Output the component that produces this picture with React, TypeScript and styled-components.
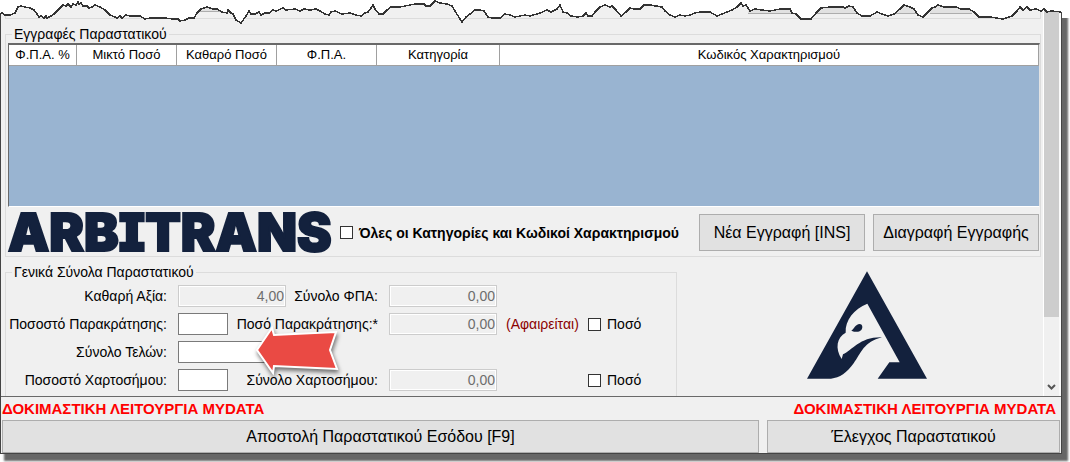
import React from "react";
import styled, { createGlobalStyle } from "styled-components";

const GlobalStyle = createGlobalStyle`
  *, *::before, *::after { box-sizing: border-box; }
  body {
    margin: 0;
    background: #fff;
    color: #000;
    font-family: "Liberation Sans", Arial, sans-serif;
    font-size: 14px;
    line-height: 16px;
    overflow: hidden;
  }
  button, input { font: inherit; color: inherit; }
`;

const Window = styled.div`
  position: relative;
  margin: 0 8px 8px 0;
  background: #f0f0f0;
  border: 1px solid #444;
  border-top: 0;
  box-shadow: 5px 6px 2px 1px #666;
`;

const TornEdge = styled.svg`
  position: absolute;
  top: 0;
  left: -1px;
  width: calc(100% + 10px);
  height: 24px;
`;

const ScrollPanel = styled.div`
  display: flex;
  border-bottom: 1px solid #696969;
`;

const Content = styled.div`
  flex: 1;
  min-width: 0;
  padding: 0 2px 0 4px;
`;

const PreviousGroup = styled.div`
  height: 19px;
  margin-bottom: 7px;
  border: 1px solid #dcdcdc;
  border-top: 0;
`;

const Group = styled.fieldset<{ $open?: boolean }>`
  min-width: 0;
  margin: 0;
  padding: ${(p) => (p.$open ? "5px 4px 5px 0" : "1px 0 5px 2px")};
  border: 1px solid #dcdcdc;
  border-bottom-width: ${(p) => (p.$open ? 0 : 1)}px;
`;

const Legend = styled.legend<{ $inset: number }>`
  margin-left: ${(p) => p.$inset}px;
  padding: 0 2px;
`;

const Grid = styled.div`
  height: 164px;
  background: #99b4d1;
  border: 1px solid #696969;
  border-top-width: 2px;
  border-right-color: #e3e3e3;
  border-bottom-color: #fff;
`;

const Table = styled.table`
  width: 100%;
  table-layout: fixed;
  border-collapse: separate;
  border-spacing: 0;
  font-size: 13px;
`;

const HeadCell = styled.th<{ $width?: number }>`
  width: ${(p) => (p.$width ? `${p.$width}px` : "auto")};
  height: 21px;
  padding: 0;
  background: #fff;
  border-right: 1px solid #a0a0a0;
  border-bottom: 1px solid #a0a0a0;
  font-weight: normal;
`;

const Actions = styled.div`
  display: flex;
  align-items: center;
  margin-top: 7px;
`;

const Wordmark = styled.span`
  width: 332px;
  color: #13213d;
  font-family: Inter, "Liberation Sans", sans-serif;
  font-size: 52px;
  font-weight: 900;
  line-height: 36px;
  font-feature-settings: "cv08" 1;
  -webkit-text-stroke: 2px #13213d;
  white-space: nowrap;
`;

const Check = styled.label<{ $bold?: boolean }>`
  display: flex;
  align-items: center;
  gap: 6px;
  font-weight: ${(p) => (p.$bold ? "bold" : "normal")};
  white-space: nowrap;
`;

const Box = styled.input`
  appearance: none;
  width: 13px;
  height: 13px;
  margin: 0;
  background: #fff;
  border: 1px solid #333;
`;

const Button = styled.button<{ $grow?: boolean }>`
  height: ${(p) => (p.$grow ? 33 : 37)}px;
  width: ${(p) => (p.$grow ? "100%" : "166px")};
  padding: 0;
  background: #e1e1e1;
  border: 1px solid #adadad;
  font-size: 16px;
  white-space: nowrap;
`;

const ButtonPair = styled.div`
  display: flex;
  gap: 8px;
  margin-left: auto;
  margin-right: 1px;
`;

const Lower = styled.div`
  display: flex;
  align-items: flex-start;
  gap: 16px;
  margin-top: 7px;
`;

const Totals = styled.div`
  position: relative;
  flex: 0 0 672px;
`;

const Fields = styled.div`
  display: grid;
  grid-template-columns: 172px 108px 103px 108px 82px auto;
  grid-auto-rows: 22px;
  row-gap: 6px;
  align-items: center;
`;

const FieldLabel = styled.label<{ $column: number }>`
  grid-column: ${(p) => p.$column};
  justify-self: end;
  margin-right: 11px;
  white-space: nowrap;
`;

const Field = styled.input<{ $short?: boolean }>`
  width: ${(p) => (p.$short ? 50 : 108)}px;
  height: 22px;
  margin: 0;
  padding: 0 1px;
  background: #fff;
  border: 1px solid #7a7a7a;
  border-radius: 0;
  text-align: right;
  &:disabled {
    color: #6d6d6d;
    background: #f0f0f0;
    border-color: #ccc;
    box-shadow: inset 0 0 0 1px #fff;
  }
`;

const Note = styled.span`
  padding-left: 9px;
  color: #8b0000;
  white-space: nowrap;
`;

const CheckSlot = styled.div`
  grid-column: 6;
  padding-left: 9px;
`;

const Pointer = styled.svg`
  position: absolute;
  left: 246px;
  top: 56px;
  filter: drop-shadow(1px 3px 2px #0008);
`;

const Emblem = styled.svg`
  display: block;
  margin: 7px auto 0;
`;

const ScrollBar = styled.div`
  display: flex;
  flex-direction: column;
  justify-content: space-between;
  width: 18px;
  border-left: 1px solid #fff;
  border-right: 2px solid #fafafa;
`;

const Thumb = styled.div`
  height: 317px;
  background: #cdcdcd;
`;

const Arrow = styled.svg`
  align-self: center;
  margin-bottom: 5px;
`;

const Footer = styled.div`
  display: grid;
  grid-template-columns: 757fr 293fr;
  column-gap: 8px;
  padding: 0 1px;
`;

const Status = styled.p<{ $end?: boolean }>`
  margin: 0;
  padding-right: ${(p) => (p.$end ? 4 : 0)}px;
  color: #f00;
  font-size: 15px;
  font-weight: bold;
  line-height: 23px;
  white-space: nowrap;
  text-align: ${(p) => (p.$end ? "right" : "left")};
`;

const tear =
  "0,14 2,13 5,15 10,15 15,13 17,9 18,7 21,6 25,7 30,8 34,10 37,14 39,17 41,16 44,18 46,16 47,18 51,16 54,14 57,11 60,8 63,5 66,6 68,4 71,7 73,4 76,5 78,2 79,4 81,3 83,6 87,6 89,8 92,7 95,5 100,7 105,10 110,15 115,17 117,18 120,16 122,18 126,15 130,16 140,16 145,19 150,18 158,18 165,18 173,19 178,19 180,21 185,20 189,18 194,18 197,13 201,9 207,7 213,9 217,9 222,12 227,13 228,10 231,13 233,14 236,20 241,23 246,16 249,11 251,14 255,14 259,12 261,15 265,13 269,13 273,10 276,11 283,8 286,10 295,9 300,11 304,9 310,10 316,9 320,11 325,14 329,15 331,12 335,11 342,14 350,13 356,15 361,16 365,13 368,12 371,8 373,5 375,9 379,14 383,14 387,10 391,7 400,7 410,5 415,4 424,4 426,6 430,6 435,1 440,3 447,4 452,6 455,11 460,19 462,22 466,17 470,14 475,10 480,10 484,11 488,17 492,18 500,18 505,14 510,15 515,17 525,15 530,16 540,13 547,10 551,12 557,9 560,5 563,12 567,13 571,16 578,17 583,16 586,13 588,16 592,16 595,12 600,7 605,5 610,7 612,6 616,10 621,16 626,12 630,8 634,9 640,9 644,5 650,5 662,7 665,11 670,15 675,17 680,15 685,16 690,15 695,13 700,12 710,12 717,16 722,14 727,12 732,10 737,7 741,3 743,6 746,5 750,11 755,9 762,10 770,11 780,9 790,9 792,13 796,14 801,19 811,19 816,13 821,8 830,7 843,7 845,8 849,6 853,7 857,13 862,16 870,16 877,12 882,14 888,16 894,14 900,9 904,5 910,7 914,9 918,15 923,17 928,12 932,8 935,7 938,5 944,7 956,7 961,9 969,9 974,12 979,17 990,17 1003,19 1012,16 1017,11 1020,7 1023,10 1027,7 1030,10 1036,9 1041,11 1044,9 1047,12 1051,11 1061,12";

const columns: [string, number?][] = [
  ["Φ.Π.Α. %", 68],
  ["Μικτό Ποσό", 100],
  ["Καθαρό Ποσό", 100],
  ["Φ.Π.Α.", 100],
  ["Κατηγορία", 123],
  ["Κωδικός Χαρακτηρισμού"],
];

export default function App() {
  return (
    <>
      <GlobalStyle />
      <Window>
        <ScrollPanel>
          <Content>
            <PreviousGroup />
            <Group>
              <Legend $inset={4}>Εγγραφές Παραστατικού</Legend>
              <Grid>
                <Table>
                  <thead>
                    <tr>
                      {columns.map(([title, width]) => (
                        <HeadCell key={title} $width={width} scope="col">
                          {title}
                        </HeadCell>
                      ))}
                    </tr>
                  </thead>
                </Table>
              </Grid>
              <Actions>
                <Wordmark>ARBITRANS</Wordmark>
                <Check $bold>
                  <Box type="checkbox" />
                  Όλες οι Κατηγορίες και Κωδικοί Χαρακτηρισμού
                </Check>
                <ButtonPair>
                  <Button type="button">Νέα Εγγραφή [INS]</Button>
                  <Button type="button">Διαγραφή Εγγραφής</Button>
                </ButtonPair>
              </Actions>
            </Group>
            <Lower>
              <Totals>
                <Group $open>
                  <Legend $inset={6}>Γενικά Σύνολα Παραστατικού</Legend>
                  <Fields>
                    <FieldLabel $column={1} htmlFor="net">Καθαρή Αξία:</FieldLabel>
                    <Field id="net" disabled defaultValue="4,00" />
                    <FieldLabel $column={3} htmlFor="vat">Σύνολο ΦΠΑ:</FieldLabel>
                    <Field id="vat" disabled defaultValue="0,00" />

                    <FieldLabel $column={1} htmlFor="rate">Ποσοστό Παρακράτησης:</FieldLabel>
                    <Field id="rate" $short />
                    <FieldLabel $column={3} htmlFor="held">Ποσό Παρακράτησης:*</FieldLabel>
                    <Field id="held" disabled defaultValue="0,00" />
                    <Note>(Αφαιρείται)</Note>
                    <CheckSlot>
                      <Check>
                        <Box type="checkbox" />
                        Ποσό
                      </Check>
                    </CheckSlot>

                    <FieldLabel $column={1} htmlFor="fees">Σύνολο Τελών:</FieldLabel>
                    <Field id="fees" />

                    <FieldLabel $column={1} htmlFor="stampRate">Ποσοστό Χαρτοσήμου:</FieldLabel>
                    <Field id="stampRate" $short />
                    <FieldLabel $column={3} htmlFor="stamp">Σύνολο Χαρτοσήμου:</FieldLabel>
                    <Field id="stamp" disabled defaultValue="0,00" />
                    <CheckSlot>
                      <Check>
                        <Box type="checkbox" />
                        Ποσό
                      </Check>
                    </CheckSlot>
                  </Fields>
                </Group>
                <Pointer width="90" height="58" viewBox="251 320 90 58" aria-hidden="true">
                  <path
                    d="M257 350 272 328 274 335 336 332 330 350 337 369 274 366 273 373Z"
                    fill="#ea4a44"
                    stroke="#fff"
                    strokeWidth="2"
                  />
                </Pointer>
              </Totals>
              <Emblem width="120" height="108" viewBox="80 34 360 322" fill="#13213d" aria-hidden="true">
                <path d="M260 34 440 356H292L327 307H358L261 131C221 147 194 180 196 218C170 232 163 264 184 297L188 283C216 271 239 230 305 232C250 245 242 280 220 310C200 338 178 354 152 356H80Z" />
                <path d="M213 212C221 207 225 193 238 192C246 192 249 203 243 210C236 217 225 217 213 212Z" />
              </Emblem>
            </Lower>
          </Content>
          <ScrollBar>
            <Thumb />
            <Arrow width="9" height="7" viewBox="0 0 9 7" aria-hidden="true">
              <path d="M1 1 4.500 4.500 8 1" fill="none" stroke="#555" strokeWidth="2" />
            </Arrow>
          </ScrollBar>
        </ScrollPanel>
        <Footer>
          <Status>ΔΟΚΙΜΑΣΤΙΚΗ ΛΕΙΤΟΥΡΓΙΑ MYDATA</Status>
          <Status $end>ΔΟΚΙΜΑΣΤΙΚΗ ΛΕΙΤΟΥΡΓΙΑ MYDATA</Status>
          <Button type="button" $grow>Αποστολή Παραστατικού Εσόδου [F9]</Button>
          <Button type="button" $grow>Έλεγχος Παραστατικού</Button>
        </Footer>
        <TornEdge viewBox="0 0 1070 24" preserveAspectRatio="none" aria-hidden="true">
          <path d="M198 11V8H222V11M748 4H793V13H748M816 4H857V13H816M896 4H916V13H896M930 4H972V13H930" fill="#e1e1e1" />
          <path d="M198 11.500H222M748 13.500H793M816 13.500H857M896 13.500H916M930 13.500H972" stroke="#adadad" />
          <polygon points={`0,0 ${tear} 1062,12 1062,18 1071,18 1071,0`} fill="#fff" />
          <polyline points={tear} fill="none" stroke="#333" strokeWidth="1.500" shapeRendering="crispEdges" />
        </TornEdge>
      </Window>
    </>
  );
}
